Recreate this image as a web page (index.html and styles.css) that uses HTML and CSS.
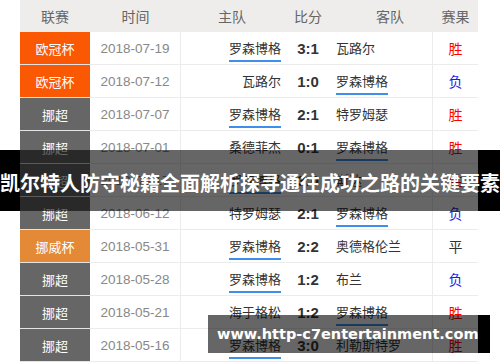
FILE: index.html
```html
<!DOCTYPE html>
<html lang="zh">
<head>
<meta charset="utf-8">
<title>赛程</title>
<link rel="stylesheet" href="styles.css">
</head>
<body>
<div class="page">
  <div class="board">
    <div class="row head">
      <div class="c">联赛</div>
      <div class="c">时间</div>
      <div class="c">主队</div>
      <div class="c">比分</div>
      <div class="c away-h">客队</div>
      <div class="c">赛果</div>
    </div>

    <div class="row">
      <div class="lg ucl">欧冠杯</div>
      <div class="tm">2018-07-19</div>
      <div class="home"><span class="hl">罗森博格</span></div>
      <div class="sc">3:1</div>
      <div class="away"><span>瓦路尔</span></div>
      <div class="rs win">胜</div>
    </div>
    <div class="row">
      <div class="lg ucl">欧冠杯</div>
      <div class="tm">2018-07-12</div>
      <div class="home"><span>瓦路尔</span></div>
      <div class="sc">1:0</div>
      <div class="away"><span class="hl">罗森博格</span></div>
      <div class="rs lose">负</div>
    </div>
    <div class="row">
      <div class="lg nor">挪超</div>
      <div class="tm">2018-07-07</div>
      <div class="home"><span class="hl">罗森博格</span></div>
      <div class="sc">2:1</div>
      <div class="away"><span>特罗姆瑟</span></div>
      <div class="rs win">胜</div>
    </div>
    <div class="row">
      <div class="lg nor">挪超</div>
      <div class="tm">2018-07-01</div>
      <div class="home"><span>桑德菲杰</span></div>
      <div class="sc">0:1</div>
      <div class="away"><span class="hl">罗森博格</span></div>
      <div class="rs win">胜</div>
    </div>
    <div class="row">
      <div class="lg nor">挪超</div>
      <div class="tm">2018-06-17</div>
      <div class="home"><span class="hl">罗森博格</span></div>
      <div class="sc">3:0</div>
      <div class="away"><span>斯达</span></div>
      <div class="rs win">胜</div>
    </div>
    <div class="row">
      <div class="lg nor">挪超</div>
      <div class="tm">2018-06-12</div>
      <div class="home"><span>特罗姆瑟</span></div>
      <div class="sc">2:1</div>
      <div class="away"><span class="hl">罗森博格</span></div>
      <div class="rs lose">负</div>
    </div>
    <div class="row">
      <div class="lg cup">挪威杯</div>
      <div class="tm">2018-05-31</div>
      <div class="home"><span class="hl">罗森博格</span></div>
      <div class="sc">2:2</div>
      <div class="away"><span>奥德格伦兰</span></div>
      <div class="rs draw">平</div>
    </div>
    <div class="row">
      <div class="lg nor">挪超</div>
      <div class="tm">2018-05-28</div>
      <div class="home"><span class="hl">罗森博格</span></div>
      <div class="sc">1:2</div>
      <div class="away"><span>布兰</span></div>
      <div class="rs lose">负</div>
    </div>
    <div class="row">
      <div class="lg nor">挪超</div>
      <div class="tm">2018-05-21</div>
      <div class="home"><span>海于格松</span></div>
      <div class="sc">1:2</div>
      <div class="away"><span class="hl">罗森博格</span></div>
      <div class="rs win">胜</div>
    </div>
    <div class="row">
      <div class="lg nor">挪超</div>
      <div class="tm">2018-05-16</div>
      <div class="home"><span class="hl">罗森博格</span></div>
      <div class="sc">3:0</div>
      <div class="away"><span>利勒斯特罗</span></div>
      <div class="rs win">胜</div>
    </div>
  </div>

  <div class="banner">凯尔特人防守秘籍全面解析探寻通往成功之路的关键要素</div>
  <div class="watermark">www.http-c7entertainment.com</div>
</div>
</body>
</html>
```

FILE: styles.css
```css
* { box-sizing: border-box; }

html, body {
  margin: 0;
  padding: 0;
  background: #fff;
}

body {
  width: 500px;
  height: 362px;
  overflow: hidden;
  font-family: "Liberation Sans", "Noto Sans CJK SC", sans-serif;
}

.page {
  position: relative;
  width: 500px;
  height: 362px;
  padding-left: 20px;
}

.board {
  width: 458px;
}

.row {
  display: grid;
  grid-template-columns: 70px 91px 102px 50px 100px 45px;
  height: 33px;
}

.row > div {
  display: flex;
  align-items: center;
  border-bottom: 1px solid #ececec;
  font-size: 13px;
  color: #333;
  font-family: "Noto Sans CJK SC", sans-serif;
}

.row.head {
  height: 32px;
  background: #eeedeb;
}

.row.head > div {
  justify-content: center;
  border-bottom: none;
  color: #666;
  font-size: 14px;
}

.row.head .away-h {
  padding-left: 14px;
}

.row > .lg {
  justify-content: center;
  color: #fff;
  font-size: 13px;
  border-bottom: 1px solid #e4e4e4;
}

.ucl { background: #fb5804; }
.nor { background: #666666; }
.cup { background: #e48a37; }

.row > .tm {
  justify-content: center;
  color: #888;
  font-family: "Liberation Sans", sans-serif;
  font-size: 13.5px;
  border-right: 1px solid #ececec;
}

.row > .home {
  justify-content: flex-end;
  padding-right: 2px;
}

.row > .away {
  padding-left: 3px;
  border-right: 1px solid #ececec;
}

.home span, .away span {
  position: relative;
  line-height: 16px;
}

.hl::after {
  content: "";
  position: absolute;
  left: 0;
  right: 0;
  top: 20px;
  height: 2px;
  background: #3f8fea;
}

.row > .sc {
  justify-content: center;
  font-family: "Liberation Sans", sans-serif;
  font-weight: bold;
  font-size: 15px;
  color: #333;
}

.row > .rs {
  justify-content: center;
  font-size: 14px;
}

.win { color: #f00 !important; }
.lose { color: #1d1dea !important; }
.draw { color: #333 !important; }

.banner {
  position: absolute;
  left: 0;
  top: 150px;
  width: 500px;
  height: 61px;
  padding-top: 4px;
  display: flex;
  align-items: center;
  justify-content: center;
  white-space: nowrap;
  overflow: hidden;
  background: linear-gradient(to right, #000 0, #000 20px, rgba(0,0,0,0.6) 20px, rgba(0,0,0,0.6) 478px, #000 478px);
  color: #fff;
  font-family: "Noto Sans CJK SC", sans-serif;
  font-weight: bold;
  font-size: 20px;
}

.watermark {
  position: absolute;
  left: 208px;
  top: 315px;
  width: 282px;
  height: 38px;
  padding-left: 9px;
  display: flex;
  align-items: center;
  white-space: nowrap;
  background: linear-gradient(to right, rgba(0,0,0,0.6) 0, rgba(0,0,0,0.6) 270px, #000 270px);
  color: #fff;
  font-family: "DejaVu Sans", sans-serif;
  font-weight: bold;
  font-size: 14.5px;
}
```
